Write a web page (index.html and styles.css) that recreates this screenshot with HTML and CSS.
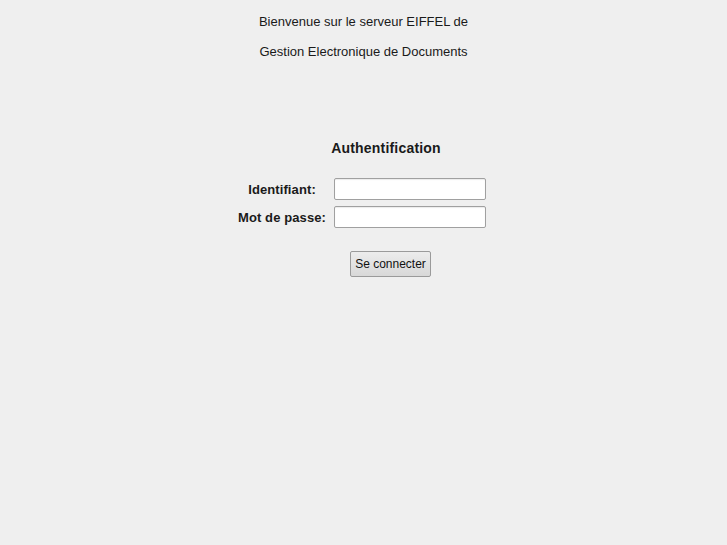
FILE: index.html
```html
<!DOCTYPE html>
<html lang="fr">
<head>
<meta charset="utf-8">
<title>EIFFEL</title>
<link rel="stylesheet" href="styles.css">
</head>
<body>
<div class="welcome">
  <div class="line">Bienvenue sur le serveur EIFFEL de</div>
  <div class="line">Gestion Electronique de Documents</div>
</div>
<div class="auth">
  <h1 class="title">Authentification</h1>
  <div class="grid">
    <label class="lbl" for="id">Identifiant:</label>
    <input class="field" id="id" type="text">
    <label class="lbl" for="pw">Mot de passe:</label>
    <input class="field" id="pw" type="password">
  </div>
  <div class="actions">
    <button class="btn" type="button">Se connecter</button>
  </div>
</div>
</body>
</html>
```
FILE: styles.css
```css
html, body {
  margin: 0;
  padding: 0;
  background: #efefef;
  font-family: "Liberation Sans", Arial, sans-serif;
  color: #1a1a1a;
}
.welcome {
  padding-top: 7px;
  text-align: center;
  font-size: 13px;
  line-height: 30px;
}
.auth {
  display: flex;
  flex-direction: column;
  align-items: center;
}
.title {
  margin: 69px 0 0 45px;
  font-size: 14px;
  font-weight: bold;
  line-height: 24px;
  letter-spacing: 0.2px;
}
.grid {
  margin: 18px 7px 0 0;
  display: grid;
  grid-template-columns: 96px 152px;
  column-gap: 4px;
  row-gap: 6px;
  align-items: center;
}
.lbl {
  font-size: 13px;
  font-weight: bold;
  text-align: center;
  letter-spacing: 0.1px;
}
.field {
  box-sizing: border-box;
  width: 152px;
  height: 22px;
  margin: 0;
  border: 1px solid #a0a0a0;
  border-radius: 2px;
  background: #ffffff;
  box-shadow: inset 0 1px 1px rgba(0,0,0,0.08);
}
.actions {
  margin: 23px 0 0 54px;
}
.btn {
  box-sizing: border-box;
  width: 81px;
  height: 26px;
  padding: 0;
  border: 1px solid #9a9a9a;
  border-radius: 2px;
  background: linear-gradient(#ececec, #d8d8d8);
  font-family: "Liberation Sans", Arial, sans-serif;
  font-size: 12px;
  color: #111;
}
```
